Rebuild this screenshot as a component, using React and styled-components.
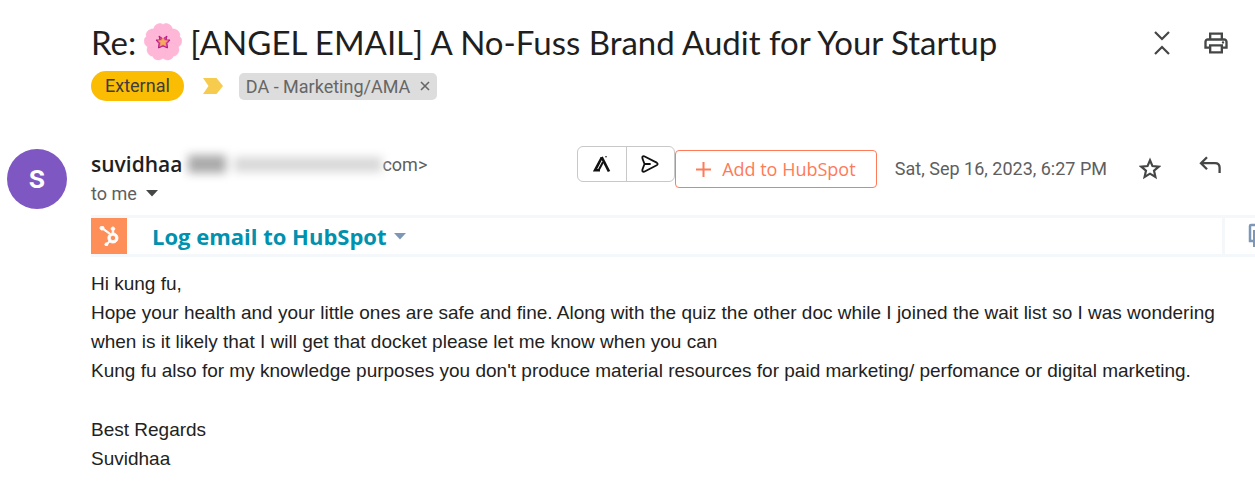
import React from 'react';
import styled, { createGlobalStyle } from 'styled-components';
import { FaHubspot } from 'react-icons/fa';
import { MdOutlinePrint } from 'react-icons/md';

const GlobalStyle = createGlobalStyle`
  * {
    box-sizing: border-box;
  }

  body {
    margin: 0;
    background: #fff;
    color: #1f1f1f;
    font-family: Roboto, 'Liberation Sans', sans-serif;
    overflow-x: hidden;
  }

  button {
    padding: 0;
    border: 0;
    background: none;
    color: inherit;
    font: inherit;
    cursor: pointer;
  }

  svg {
    display: block;
    flex: none;
  }
`;

// Header
const Header = styled.header`
  display: flex;
  justify-content: space-between;
  align-items: flex-start;
  padding: 22px 25px 0 91px;
`;

const Title = styled.h1`
  display: flex;
  align-items: center;
  gap: 8px;
  margin: 0;
  font-family: Lato, sans-serif;
  font-size: 33px;
  font-weight: 400;
  line-height: 40px;
  white-space: nowrap;
`;

const HeaderActions = styled.div`
  display: flex;
  align-items: center;
  gap: 32px;
  height: 42px;
`;

const IconButton = styled.button`
  display: flex;
  color: #444746;
`;

const Labels = styled.div`
  display: flex;
  align-items: center;
  height: 30px;
  margin-top: 7px;
  padding-left: 91px;
  font-size: 18px;
`;

const External = styled.span`
  height: 30px;
  padding: 0 14px;
  border-radius: 15px;
  background: #fbbc04;
  color: #3c3c3c;
  line-height: 30px;
`;

const Importance = styled.button`
  margin: 0 16px 0 19px;
`;

const Tag = styled.span`
  display: flex;
  align-items: center;
  gap: 10px;
  height: 27px;
  padding: 0 7px;
  border-radius: 5px;
  background: #ddd;
  color: #666;
`;

// Message
const Message = styled.article`
  display: grid;
  grid-template-columns: 60px minmax(0, 1fr);
  column-gap: 24px;
  padding: 45px 0 0 7px;
`;

const Avatar = styled.div`
  display: flex;
  align-items: center;
  justify-content: center;
  width: 60px;
  height: 60px;
  margin-top: 3px;
  padding-bottom: 6px;
  border-radius: 50%;
  background: #7e57c2;
  color: #fff;
  font-size: 33px;
  font-weight: 500;
`;

const Meta = styled.div`
  display: flex;
  justify-content: space-between;
  height: 69px;
  padding-right: 34px;
`;

const Sender = styled.div`
  display: flex;
  align-items: center;
  height: 36px;
  color: #5e5e5e;
  font-size: 18px;
`;

const SenderName = styled.strong`
  color: #1f1f1f;
  font-family: 'Open Sans', sans-serif;
  font-size: 21px;
  font-weight: 600;
`;

const Redacted = styled.span`
  display: flex;
  align-items: center;
  gap: 8px;
  width: 200px;
  padding-left: 6px;
  filter: blur(5px);
`;

const Smudge = styled.span`
  flex: ${({ $grow }) => $grow};
  height: ${({ $strong }) => ($strong ? 18 : 15)}px;
  background: ${({ $strong }) => ($strong ? '#aaa' : '#d8d8d8')};
`;

const Recipient = styled.button`
  display: flex;
  align-items: center;
  gap: 9px;
  height: 22px;
  color: #5e5e5e;
  font-size: 18px;
`;

const Actions = styled.div`
  display: flex;
  align-items: flex-start;
`;

const ToolGroup = styled.div`
  display: flex;
  height: 36px;
  border: 1px solid #c8c8c8;
  border-radius: 6px;
`;

const ToolButton = styled.button`
  display: flex;
  align-items: center;
  justify-content: center;
  width: 48px;

  & + & {
    border-left: 1px solid #c8c8c8;
  }
`;

const AddButton = styled.button`
  display: flex;
  align-items: center;
  justify-content: center;
  gap: 11px;
  width: 202px;
  height: 38px;
  margin-top: 4px;
  border: 1px solid #ff7a59;
  border-radius: 4px;
  color: #ff7a59;
  font-family: 'Open Sans', sans-serif;
  font-size: 18px;
`;

const Timestamp = styled.time`
  margin: 0 32px 0 18px;
  color: #5e5e5e;
  font-size: 18px;
  line-height: 46px;
  white-space: nowrap;
`;

const MessageActions = styled.div`
  display: flex;
  align-items: flex-start;
  gap: 38px;
  padding-top: 10px;
`;

const LogBar = styled.div`
  display: flex;
  height: 42px;
  border-top: 3px solid #f5f8fa;
  border-bottom: 3px solid #f5f8fa;
`;

const Sprocket = styled.span`
  display: flex;
  align-items: center;
  justify-content: center;
  width: 36px;
  background: #ff8f59;
  color: #fff;

  path {
    stroke: #fff;
    stroke-width: 22px;
  }
`;

const LogButton = styled.button`
  display: flex;
  align-items: center;
  gap: 7px;
  margin-left: 25px;
  color: #0091ae;
  font-family: 'Open Sans', sans-serif;
  font-size: 22px;
  font-weight: 700;
`;

const CopyButton = styled.button`
  display: flex;
  align-items: center;
  width: 33px;
  margin-left: auto;
  padding-left: 23px;
  border-left: 3px solid #f5f8fa;
  overflow: hidden;
`;

const Body = styled.div`
  padding: 12px 8px 0 0;
  color: #222;
  font-family: 'Liberation Sans', Arial, sans-serif;
  font-size: 19px;
  line-height: 29px;

  p {
    margin: 0;
  }

  p:last-child {
    margin-top: 30px;
  }
`;

function Caret({ color }) {
  return (
    <svg width="12" height="7" viewBox="0 0 12 7" fill={color}>
      <path d="M0 0h12L6 6.5z" />
    </svg>
  );
}

function Blossom() {
  const angles = [0, 72, 144, 216, 288];

  return (
    <svg width="38" height="38" viewBox="-19 -19 38 38" role="img" aria-label="Blossom">
      {angles.map(angle => (
        <path
          key={angle}
          transform={`rotate(${angle})`}
          d="M0 0C-5-3-9.500-7-9.500-12C-9.500-16-6-18.800-2-18.500L0-17.500L2-18.500C6-18.800 9.500-16 9.500-12C9.500-7 5-3 0 0Z"
          fill="#ffb7d8"
          stroke="#fdaed3"
          strokeWidth=".4"
        />
      ))}
      <path
        d="M0-3L-4-6L-3-2L-7-2L-4 1.500L-4.500 6L0 4L4.500 6L4 1.500L7-2L3-2L4-6Z"
        fill="#d4489c"
        stroke="#b8187f"
        strokeWidth="1"
      />
      <path
        d="M0-4.500L1.400-1.600L4.600-1.300L2.200.8L2.900 3.900L0 2.400L-2.900 3.900L-2.200.8L-4.600-1.300L-1.400-1.600Z"
        fill="#f5a860"
        stroke="#f5a860"
        strokeWidth=".6"
      />
    </svg>
  );
}

export default function App() {
  return (
    <>
      <GlobalStyle />
      <main>
        <Header>
          <Title>
            <span>Re:</span>
            <Blossom />
            <span>[ANGEL EMAIL] A No-Fuss Brand Audit for Your Startup</span>
          </Title>
          <HeaderActions>
            <IconButton aria-label="Collapse all">
              <svg width="16" height="26" viewBox="0 0 16 26" fill="none" stroke="currentColor" strokeWidth="2.200">
                <path d="M1 2l7 7 7-7M1 24l7-7 7 7" />
              </svg>
            </IconButton>
            <IconButton aria-label="Print">
              <MdOutlinePrint size={28} />
            </IconButton>
          </HeaderActions>
        </Header>

        <Labels>
          <External>External</External>
          <Importance aria-label="Important">
            <svg width="20" height="16" viewBox="0 0 20 16" fill="#f7cb4d">
              <path d="M0 0h13.500L20 8l-6.500 8H0l5.500-8z" />
            </svg>
          </Importance>
          <Tag>
            DA - Marketing/AMA
            <IconButton aria-label="Remove label">
              <svg width="10" height="10" viewBox="0 0 10 10" stroke="#666" strokeWidth="1.600">
                <path d="M1 1l8 8M9 1L1 9" />
              </svg>
            </IconButton>
          </Tag>
        </Labels>

        <Message>
          <Avatar>s</Avatar>
          <div>
            <Meta>
              <div>
                <Sender>
                  <SenderName>suvidhaa</SenderName>
                  <Redacted aria-hidden="true">
                    <Smudge $grow={1} $strong />
                    <Smudge $grow={4} />
                  </Redacted>
                  <span>com&gt;</span>
                </Sender>
                <Recipient>
                  to me
                  <Caret color="#444746" />
                </Recipient>
              </div>
              <Actions>
                <ToolGroup>
                  <ToolButton aria-label="Apollo">
                    <svg width="18" height="18" viewBox="0 0 18 18" fill="none" stroke="#111">
                      <path d="M8.800 2.500L2 15.300H7" strokeWidth="2.600" />
                      <path d="M8.600 2L16 16.500" strokeWidth="2.700" />
                      <path d="M10 7L5.500 15.500" strokeWidth="2" />
                      <circle cx="13" cy="1.800" r=".8" fill="#111" stroke="none" />
                    </svg>
                  </ToolButton>
                  <ToolButton aria-label="Send with Apollo">
                    <svg
                      width="18"
                      height="18"
                      viewBox="0 0 18 18"
                      fill="none"
                      stroke="#111"
                      strokeWidth="1.800"
                      strokeLinejoin="round"
                      strokeLinecap="round"
                    >
                      <path d="M3.200 1.300L15.700 7.600Q17.600 9 15.700 10.300L3.200 16.700Q.8 17 1.400 14.600L3.500 9L1.400 3.400Q.8 1 3.200 1.300ZM3.500 9H9" />
                    </svg>
                  </ToolButton>
                </ToolGroup>
                <AddButton>
                  <svg width="15" height="15" viewBox="0 0 15 15" stroke="currentColor" strokeWidth="2">
                    <path d="M7.500 0v15M0 7.500h15" />
                  </svg>
                  Add to HubSpot
                </AddButton>
                <Timestamp dateTime="2023-09-16T18:27">Sat, Sep 16, 2023, 6:27 PM</Timestamp>
                <MessageActions>
                  <IconButton aria-label="Star">
                    <svg width="22" height="26" viewBox="-12 -14 24 28" fill="none" stroke="currentColor" strokeWidth="2.400">
                      <path d="M0-9.500L2.700-3.200L9.600-2.600L4.400 1.900L5.900 8.600L0 5.100L-5.900 8.600L-4.400 1.900L-9.600-2.600L-2.700-3.200Z" />
                    </svg>
                  </IconButton>
                  <IconButton aria-label="Reply">
                    <svg width="22" height="18" viewBox="0 0 22 18" fill="none" stroke="currentColor" strokeWidth="2.300">
                      <path d="M8 1.200L2 7.200l6 6M2 7.200h14q4.600 0 4.600 4.600V17" />
                    </svg>
                  </IconButton>
                </MessageActions>
              </Actions>
            </Meta>

            <LogBar>
              <Sprocket>
                <FaHubspot size={20} />
              </Sprocket>
              <LogButton>
                Log email to HubSpot
                <Caret color="#7c98b6" />
              </LogButton>
              <CopyButton aria-label="Copy">
                <svg width="24" height="26" viewBox="0 0 24 26">
                  <path d="M6 18H2V3q0-1 1-1h12" fill="none" stroke="#7c98b6" strokeWidth="2.500" />
                  <path d="M5 7h14v17H5z" fill="#7c98b6" />
                </svg>
              </CopyButton>
            </LogBar>

            <Body>
              <p>
                Hi kung fu,
                <br />
                Hope your health and your little ones are safe and fine. Along with the quiz the
                other doc while I joined the wait list so I was wondering when is it likely that I
                will get that docket please let me know when you can
                <br />
                Kung fu also for my knowledge purposes you don't produce material resources for paid
                marketing/ perfomance or digital marketing.
              </p>
              <p>
                Best Regards
                <br />
                Suvidhaa
              </p>
            </Body>
          </div>
        </Message>
      </main>
    </>
  );
}
